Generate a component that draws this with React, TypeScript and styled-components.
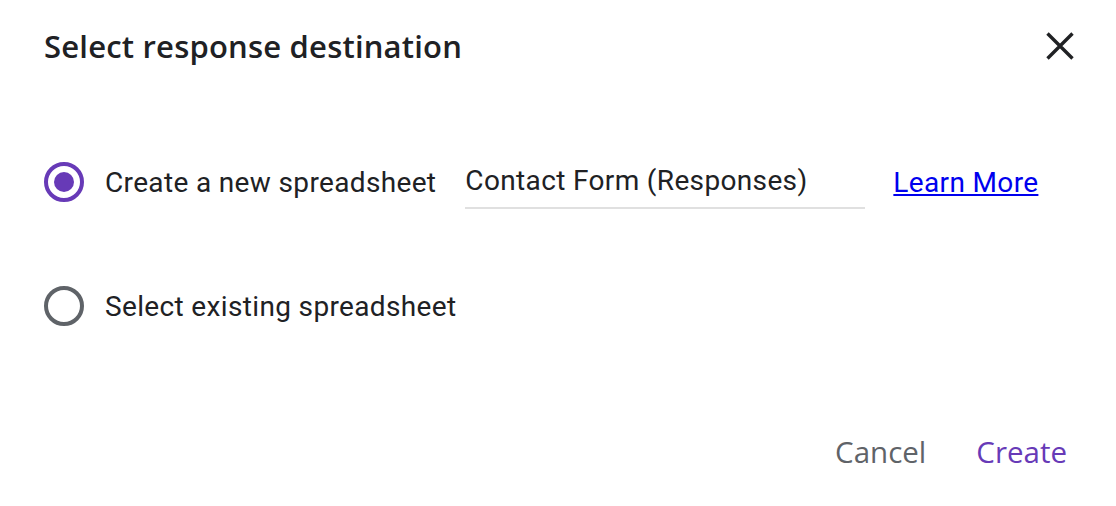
import React from "react";
import styled, { createGlobalStyle } from "styled-components";

const GlobalStyle = createGlobalStyle`
  html, body {
    margin: 0;
    padding: 0;
    background: #ffffff;
  }
`;

const Dialog = styled.div`
  width: 1116px;
  height: 506px;
  box-sizing: border-box;
  padding: 24px 34px 0 44px;
  display: flex;
  flex-direction: column;
  font-family: Roboto, "Liberation Sans", sans-serif;
  color: #202124;
`;

const Header = styled.div`
  display: flex;
  justify-content: space-between;
  align-items: center;
  height: 44px;
`;

const Title = styled.h1`
  margin: 0;
  font-family: "Open Sans", Inter, sans-serif;
  font-size: 31px;
  font-weight: 600;
  letter-spacing: 0.2px;
  color: #202124;
`;

const CloseButton = styled.button`
  border: none;
  background: none;
  padding: 0;
  width: 44px;
  height: 44px;
  display: flex;
  align-items: center;
  justify-content: center;
  cursor: pointer;
`;

const Options = styled.div`
  display: flex;
  flex-direction: column;
  gap: 84px;
  margin-top: 94px;
`;

const OptionRow = styled.label`
  display: flex;
  align-items: center;
  height: 40px;
`;

const Radio = styled.span<{ $checked?: boolean }>`
  width: 40px;
  height: 40px;
  box-sizing: border-box;
  border-radius: 50%;
  border: 4px solid ${({ $checked }) => ($checked ? "#673ab7" : "#5f6368")};
  display: flex;
  align-items: center;
  justify-content: center;
  flex-shrink: 0;
  &::after {
    content: "";
    display: ${({ $checked }) => ($checked ? "block" : "none")};
    width: 20px;
    height: 20px;
    border-radius: 50%;
    background: #673ab7;
  }
`;

const OptionLabel = styled.span`
  margin-left: 21px;
  font-size: 28px;
  letter-spacing: 0.35px;
  color: #202124;
`;

const NameInput = styled.input`
  margin-left: 29px;
  margin-top: 8px;
  width: 400px;
  border: none;
  border-bottom: 2px solid #e0e0e0;
  padding: 0 0 10px 0;
  font-family: Roboto, "Liberation Sans", sans-serif;
  font-size: 28px;
  letter-spacing: 0.35px;
  color: #202124;
  background: transparent;
  outline: none;
`;

const LearnMore = styled.a`
  margin-left: 28px;
  font-size: 28px;
  letter-spacing: 0.35px;
  color: #0000ee;
  text-decoration: underline;
`;

const Footer = styled.div`
  margin-top: auto;
  margin-bottom: 34px;
  margin-right: 15px;
  display: flex;
  justify-content: flex-end;
  gap: 50px;
`;

const TextButton = styled.button<{ $primary?: boolean }>`
  border: none;
  background: none;
  padding: 0;
  font-family: "Open Sans", Inter, sans-serif;
  font-size: 29.5px;
  font-weight: 500;
  color: ${({ $primary }) => ($primary ? "#673ab7" : "#5f6368")};
  cursor: pointer;
`;

export default function App() {
  return (
    <>
      <GlobalStyle />
      <Dialog>
        <Header>
          <Title>Select response destination</Title>
          <CloseButton aria-label="Close">
            <svg width="28" height="28" viewBox="0 0 28 28">
              <path
                d="M1.5 1.5 L26.5 26.5 M26.5 1.5 L1.5 26.5"
                stroke="#202124"
                strokeWidth="3.4"
                fill="none"
              />
            </svg>
          </CloseButton>
        </Header>
        <Options>
          <OptionRow>
            <Radio $checked />
            <OptionLabel>Create a new spreadsheet</OptionLabel>
            <NameInput defaultValue="Contact Form (Responses)" />
            <LearnMore href="#">Learn More</LearnMore>
          </OptionRow>
          <OptionRow>
            <Radio />
            <OptionLabel>Select existing spreadsheet</OptionLabel>
          </OptionRow>
        </Options>
        <Footer>
          <TextButton>Cancel</TextButton>
          <TextButton $primary>Create</TextButton>
        </Footer>
      </Dialog>
    </>
  );
}
